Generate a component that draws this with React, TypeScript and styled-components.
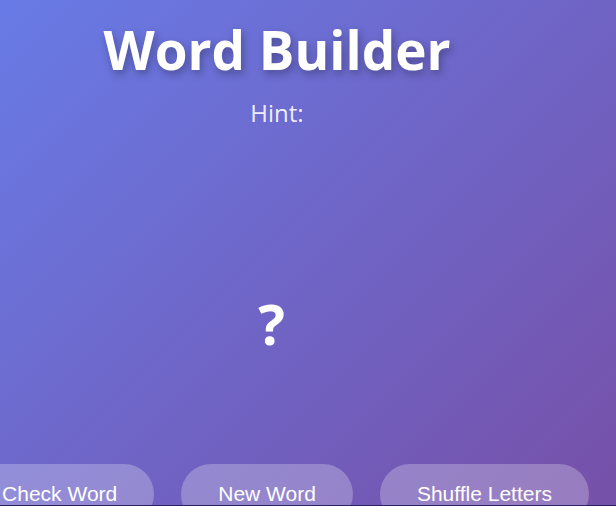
import React, { useState } from 'react';
import styled, { createGlobalStyle } from 'styled-components';

const GlobalStyle = createGlobalStyle`
  html, body {
    margin: 0;
    padding: 0;
    background: #2a2160;
    overflow: hidden;
  }

  * {
    box-sizing: border-box;
  }
`;

const Screen = styled.div`
  height: 505px;
  overflow: hidden;
  background: linear-gradient(135deg, #687be6 0%, #7650a8 100%);
  font-family: "Open Sans", "Noto Sans", sans-serif;
  color: #fff;
`;

const Game = styled.div`
  width: 554px;
  padding-top: 13px;
  display: flex;
  flex-direction: column;
  align-items: center;
`;

const Title = styled.h1`
  margin: 0;
  font-size: 53px;
  font-weight: 700;
  text-shadow: 2px 4px 8px rgba(0, 0, 0, 0.3);
`;

const Hint = styled.p`
  margin: 10px 0 0;
  font-size: 24px;
  color: rgba(255, 255, 255, 0.9);
`;

const WordSlot = styled.div`
  margin-top: 156px;
  margin-right: 11px;
  font-size: 56px;
  font-weight: 700;
`;

const LetterPool = styled.div`
  min-height: 103px;
`;

const Controls = styled.div`
  display: flex;
  gap: 27px;
  flex-shrink: 0;
`;

const ActionButton = styled.button`
  flex-shrink: 0;
  padding: 18px 37px;
  border: none;
  border-radius: 40px;
  background: rgba(255, 255, 255, 0.25);
  color: #fff;
  font-family: "Liberation Sans", Arial, sans-serif;
  font-size: 21px;
  white-space: nowrap;
  cursor: pointer;

  &:hover {
    background: rgba(255, 255, 255, 0.35);
  }
`;

export default function App() {
  const [hint] = useState('');
  const [letters] = useState<string[]>([]);

  return (
    <Screen>
      <GlobalStyle />
      <Game>
        <Title>Word Builder</Title>
        <Hint>Hint: {hint}</Hint>
        <WordSlot>?</WordSlot>
        <LetterPool>{letters.join('')}</LetterPool>
        <Controls>
          <ActionButton>Check Word</ActionButton>
          <ActionButton>New Word</ActionButton>
          <ActionButton>Shuffle Letters</ActionButton>
        </Controls>
      </Game>
    </Screen>
  );
}
